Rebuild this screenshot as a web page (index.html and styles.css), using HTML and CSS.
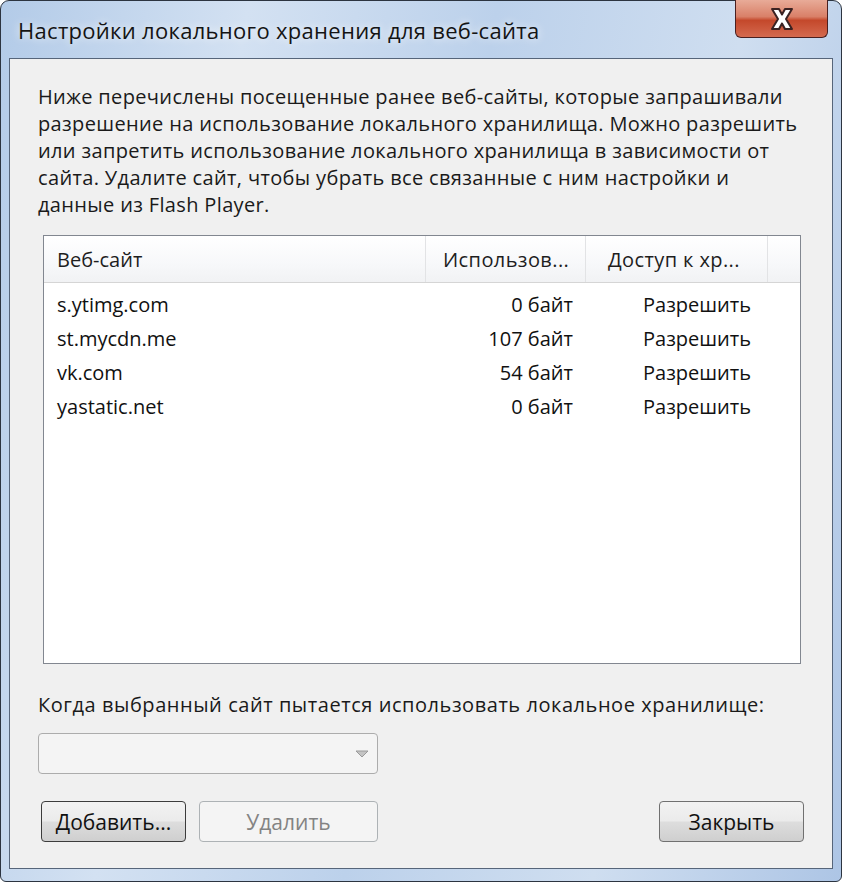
FILE: index.html
```html
<!DOCTYPE html>
<html lang="ru">
<head>
    <meta charset="UTF-8">
    <title>Настройки локального хранения для веб-сайта</title>
    <link rel="stylesheet" href="styles.css">
</head>
<body>
    <div class="window">
        <div class="titlebar">
            <span class="title">Настройки локального хранения для веб-сайта</span>
            <div class="close">
                <svg width="40" height="28" viewBox="0 0 40 28">
                    <path d="M10 4 L17 4 L20 9.5 L23 4 L30 4 L24 14 L30 24 L23 24 L20 18.5 L17 24 L10 24 L16 14 Z"
                          fill="#fff" stroke="#3a2222" stroke-width="2" stroke-linejoin="round"/>
                </svg>
            </div>
        </div>

        <div class="client">
            <p class="intro">Ниже перечислены посещенные ранее веб-сайты, которые запрашивали разрешение на использование локального хранилища. Можно разрешить или запретить использование локального хранилища в зависимости от сайта. Удалите сайт, чтобы убрать все связанные с ним настройки и данные из Flash Player.</p>

            <div class="list">
                <div class="list-head">
                    <div class="col-site">Веб-сайт</div>
                    <div class="col-size">Использов...</div>
                    <div class="col-access">Доступ к хр...</div>
                    <div class="col-rest"></div>
                </div>
                <div class="row">
                    <div class="col-site">s.ytimg.com</div>
                    <div class="col-size">0 байт</div>
                    <div class="col-access">Разрешить</div>
                </div>
                <div class="row">
                    <div class="col-site">st.mycdn.me</div>
                    <div class="col-size">107 байт</div>
                    <div class="col-access">Разрешить</div>
                </div>
                <div class="row">
                    <div class="col-site">vk.com</div>
                    <div class="col-size">54 байт</div>
                    <div class="col-access">Разрешить</div>
                </div>
                <div class="row">
                    <div class="col-site">yastatic.net</div>
                    <div class="col-size">0 байт</div>
                    <div class="col-access">Разрешить</div>
                </div>
            </div>

            <p class="label">Когда выбранный сайт пытается использовать локальное хранилище:</p>

            <div class="select">
                <svg width="14" height="8" viewBox="0 0 14 8">
                    <path d="M1 1 L13 1 L7 7 Z" fill="#c4c4c4" stroke="#9a9a9a" stroke-width="1"/>
                </svg>
            </div>

            <div class="buttons">
                <button class="btn btn-add">Добавить...</button>
                <button class="btn btn-del" disabled>Удалить</button>
                <button class="btn btn-close">Закрыть</button>
            </div>
        </div>
    </div>
</body>
</html>
```

FILE: styles.css
```css
body {
    margin: 0;
    background-color: #ffffff;
    font-family: "Open Sans", "Noto Sans", sans-serif;
}

.window {
    box-sizing: border-box;
    width: 842px;
    height: 882px;
    padding: 0 8px 12px 8px;
    border: 1px solid #2c3440;
    border-radius: 9px 9px 6px 6px;
    background: linear-gradient(100deg, #b3cbe8 0%, #d3e1f2 25%, #bcd1eb 50%, #cfdef0 75%, #adc5e5 100%);
    display: flex;
    flex-direction: column;
}

.titlebar {
    height: 57px;
    display: flex;
    align-items: flex-start;
    justify-content: space-between;
}

.title {
    margin-top: 14px;
    margin-left: 9px;
    font-size: 22px;
    letter-spacing: 0.3px;
    color: #141414;
    text-shadow: 0 0 8px rgba(255, 255, 255, 0.95);
}

.close {
    width: 93px;
    height: 38px;
    margin-right: 5px;
    margin-top: -1px;
    box-sizing: border-box;
    border: 1px solid #4a2020;
    border-top: none;
    border-radius: 0 0 6px 6px;
    background: linear-gradient(to bottom, #e8ab98 0%, #d98068 45%, #c4482b 55%, #d46a4f 100%);
    display: flex;
    align-items: center;
    justify-content: center;
}

.client {
    flex: 1;
    border: 1px solid #56657a;
    background-color: #f0f0f0;
    padding: 24px 31px 0 28px;
    display: flex;
    flex-direction: column;
}

.intro {
    margin: 0;
    font-size: 20px;
    line-height: 27px;
    letter-spacing: 0.35px;
    color: #1a1a1a;
}

.list {
    margin: 17px 0 0 5px;
    height: 427px;
    border: 1px solid #828790;
    background-color: #ffffff;
    font-size: 20px;
    color: #111;
}

.list-head {
    display: flex;
    height: 46px;
    border-bottom: 1px solid #d5d5d5;
    background: linear-gradient(to bottom, #ffffff 0%, #f7f8fa 60%, #f1f2f4 100%);
}

.list-head > div {
    display: flex;
    align-items: center;
    border-right: 1px solid #e2e3e5;
    color: #1e1e1e;
}

.list-head .col-site {
    padding-left: 13px;
}

.list-head .col-size {
    padding-left: 17px;
    letter-spacing: 0.4px;
}

.list-head .col-access {
    padding-left: 22px;
    letter-spacing: 0.4px;
}

.list-head .col-rest {
    flex: 1;
    border-right: none;
}

.col-site {
    box-sizing: border-box;
    width: 382px;
}

.col-size {
    box-sizing: border-box;
    width: 160px;
}

.col-access {
    box-sizing: border-box;
    width: 182px;
}

.row {
    display: flex;
    height: 34px;
    align-items: center;
}

.list-head + .row {
    margin-top: 4px;
}

.row .col-site {
    padding-left: 13px;
}

.row .col-size {
    text-align: right;
    padding-right: 13px;
}

.row .col-access {
    padding-left: 57px;
}

.label {
    margin: 27px 0 0 0;
    font-size: 20px;
    letter-spacing: 0.55px;
    color: #1a1a1a;
}

.select {
    box-sizing: border-box;
    width: 340px;
    height: 41px;
    margin: 15px 0 0 0;
    border: 1px solid #acacac;
    border-radius: 4px;
    background-color: #f4f4f4;
    display: flex;
    align-items: center;
    justify-content: flex-end;
    padding-right: 8px;
}

.buttons {
    display: flex;
    margin-top: 27px;
    margin-left: 3px;
}

.btn {
    box-sizing: border-box;
    width: 145px;
    height: 41px;
    border: 1px solid #707070;
    border-radius: 4px;
    background: linear-gradient(to bottom, #f2f2f2 0%, #ebebeb 48%, #dddddd 52%, #cfcfcf 100%);
    font-family: "Open Sans", "Noto Sans", sans-serif;
    font-size: 21px;
    color: #111;
    padding: 0;
}

.btn-add {
    border-color: #3c3c3c;
}

.btn-del {
    width: 179px;
    margin-left: 13px;
    border-color: #adb2b5;
    background: #f4f4f4;
    color: #838383;
}

.btn-close {
    margin-left: auto;
    margin-right: -3px;
}
```
